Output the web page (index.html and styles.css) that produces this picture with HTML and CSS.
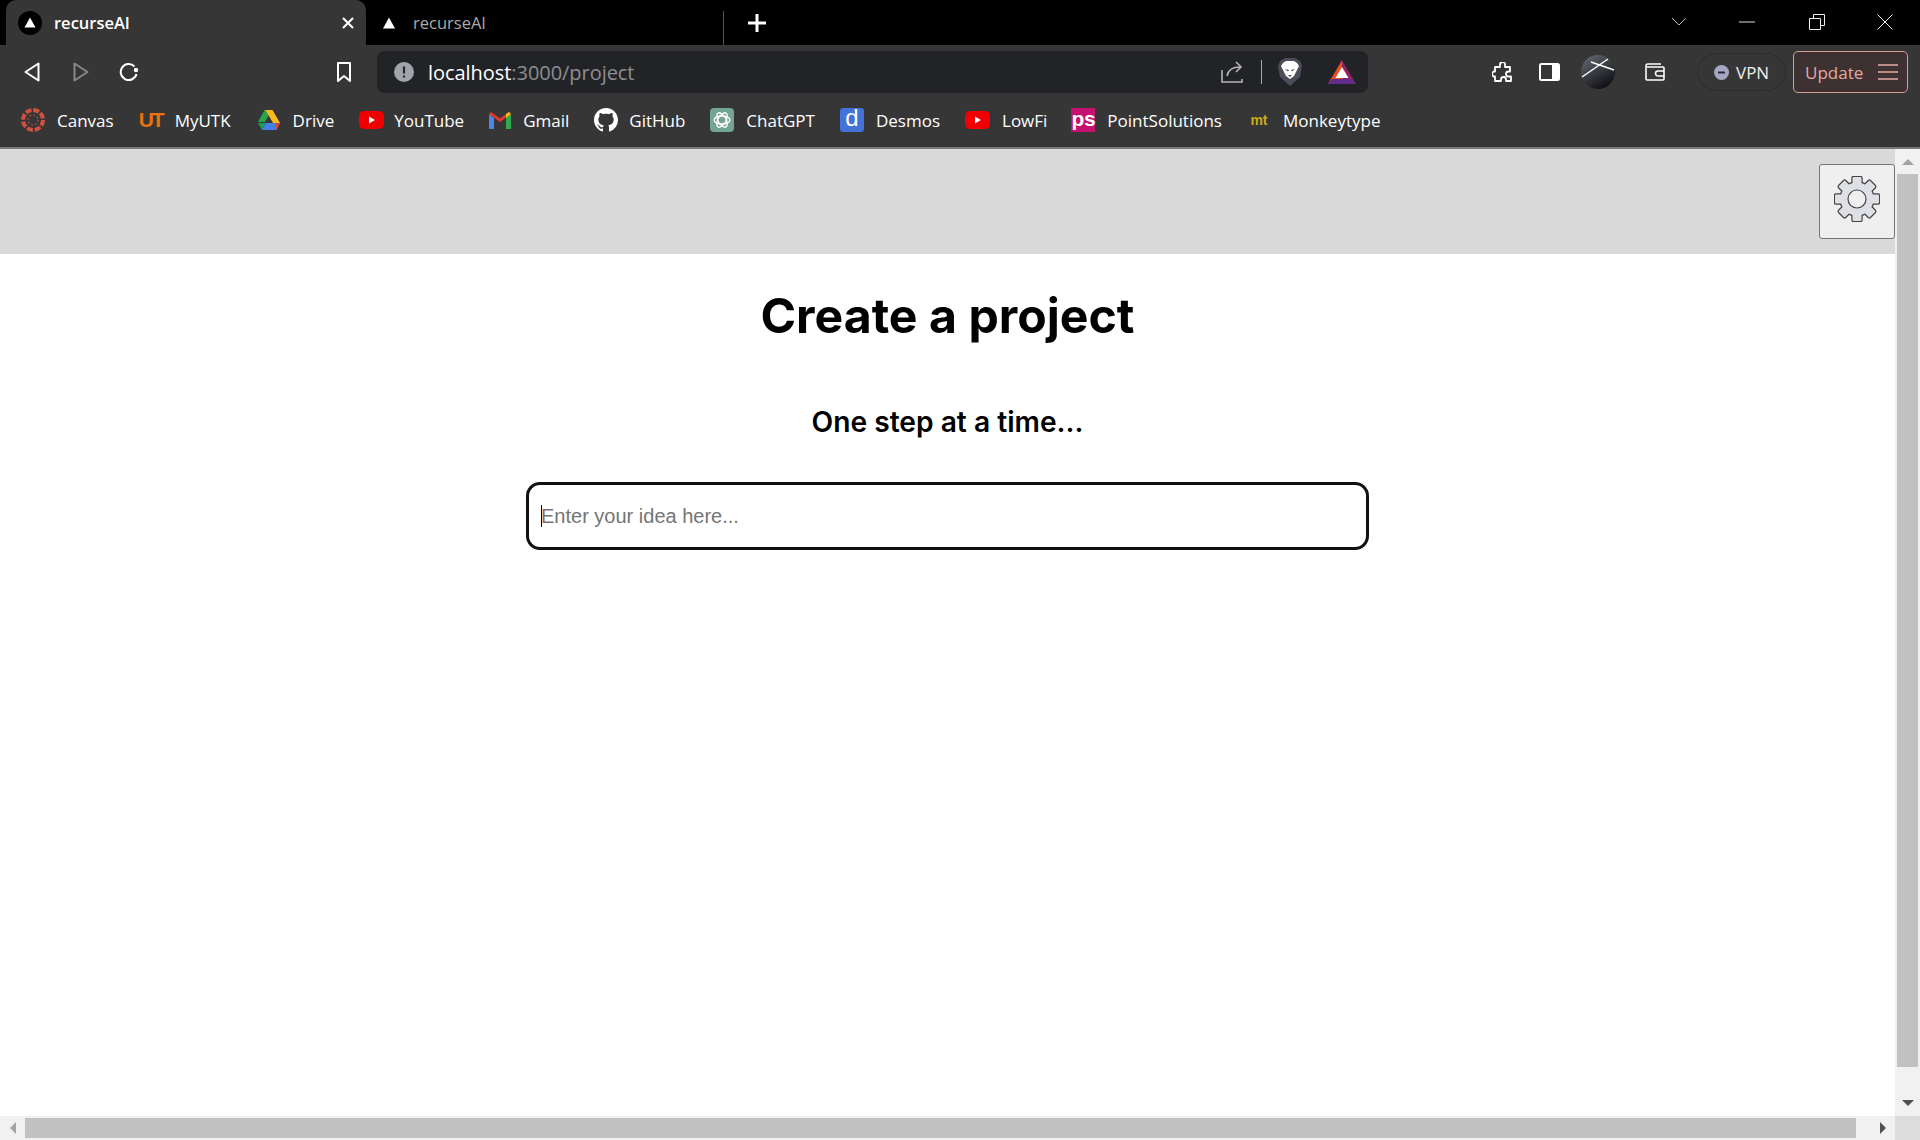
FILE: index.html
```html
<!DOCTYPE html>
<html>
  <head>
    <title>recurseAI</title>
    <meta charset="UTF-8" />
    <link rel="stylesheet" href="styles.css">
  </head>

  <body>
    <div class="tabstrip">
      <div class="tab tab-active">
        <svg class="tab-logo" width="24" height="24" viewBox="0 0 24 24"><circle cx="12" cy="12" r="12" fill="#000"/><path d="M12 6.500l5.500 10h-11z" fill="#fff"/></svg>
        <span class="tab-title">recurseAI</span>
        <svg class="tab-close" width="14" height="14" viewBox="0 0 14 14"><path d="M2 2l10 10M12 2L2 12" stroke="#fff" stroke-width="2"/></svg>
      </div>
      <div class="tab tab-idle">
        <svg class="tab-tri" width="16" height="14" viewBox="0 0 16 14"><path d="M8 1.500l6 11H2z" fill="#fff"/></svg>
        <span class="tab-title">recurseAI</span>
      </div>
      <svg class="new-tab" width="20" height="20" viewBox="0 0 20 20"><path d="M10 1v18M1 10h18" stroke="#fff" stroke-width="3"/></svg>
      <div class="window-btns">
        <svg width="16" height="10" viewBox="0 0 16 10"><path d="M1 1l7 7 7-7" fill="none" stroke="#bbb"/></svg>
        <svg class="win-min" width="16" height="2" viewBox="0 0 16 2"><path d="M0 1h16" stroke="#ddd"/></svg>
        <svg width="16" height="16" viewBox="0 0 16 16"><path d="M.5 4.500h11v11H.5zM4.500 4V.5h11v11H12" fill="none" stroke="#eee"/></svg>
        <svg width="16" height="16" viewBox="0 0 16 16"><path d="M.5.5l15 15M15.500.5l-15 15" stroke="#eee"/></svg>
      </div>
    </div>

    <div class="toolbar">
      <svg class="ico ico-back" width="16" height="20" viewBox="0 0 16 20"><path d="M14.500 1.500v17L1.500 10z" fill="none" stroke="#fff" stroke-width="2" stroke-linejoin="round"/></svg>
      <svg class="ico ico-fwd" width="16" height="20" viewBox="0 0 16 20"><path d="M1.500 1.500v17L14.500 10z" fill="none" stroke="#888" stroke-width="2" stroke-linejoin="round"/></svg>
      <svg class="ico ico-reload" width="20" height="20" viewBox="0 0 20 20"><path d="M15.500 4.500A8 8 0 1 0 17.500 12" fill="none" stroke="#fff" stroke-width="2"/><circle cx="17" cy="8" r="2.200" fill="#fff"/></svg>
      <svg class="ico ico-mark" width="14" height="20" viewBox="0 0 14 20"><path d="M1 1h12v18l-6-5-6 5z" fill="none" stroke="#fff" stroke-width="2" stroke-linejoin="round"/></svg>

      <div class="omnibox">
        <svg class="info" width="20" height="20" viewBox="0 0 20 20"><circle cx="10" cy="10" r="10" fill="#a2a3ab"/><path d="M10 4.500v7M10 13.500v2" stroke="#26272b" stroke-width="2.200"/></svg>
        <span class="url"><span class="url-host">localhost</span>:3000/project</span>
        <svg class="ico-share" width="23" height="22" viewBox="0 0 23 22"><path d="M1 9v12h20v-3M6 15c1-6 5-9 13-9M15 1l5 5-5 5" fill="none" stroke="#b5b5b5" stroke-width="1.600"/></svg>
        <span class="omni-sep"></span>
        <svg class="ico-brave" width="24" height="28" viewBox="0 0 24 28"><path d="M2 3l5-3h10l5 3 2 5-2 11-10 9L2 19 0 8z" fill="#4c4d58"/><path d="M5 5l3-2h8l3 2 2 3-2 4-3 6-4 3-4-3-3-6-2-4z" fill="#fff"/><path d="M7 11l4 1-1 1.500zM17 11l-4 1 1 1.500zM10 17h4l-2 2z" fill="#4c4d58"/></svg>
        <svg class="ico-bat" width="28" height="24" viewBox="0 0 28 24"><path d="M14 0L0 24h14z" fill="#e8501f"/><path d="M14 0l14 24H14z" fill="#8f2160"/><path d="M0 24l4-5h20l4 5z" fill="#5f2c8c"/><path d="M14 7l6.500 11h-13z" fill="#fff"/></svg>
      </div>

      <svg class="ico ico-ext" width="21" height="21" viewBox="0 0 21 21"><path d="M8 2.500a2.500 2.500 0 0 1 5 0V5h5v4.500h-1.500a2.500 2.500 0 0 0 0 5H19V19h-5v-1.500a2.500 2.500 0 0 0-5 0V19H3v-4.500H1.500a3 3 0 0 1 0-5H3V5h5z" fill="none" stroke="#fff" stroke-width="1.800" stroke-linejoin="round"/></svg>
      <svg class="ico ico-panel" width="21" height="18" viewBox="0 0 21 18"><rect x="1" y="1" width="19" height="16" rx="1.500" fill="none" stroke="#fff" stroke-width="2"/><rect x="13" y="1" width="7" height="16" fill="#fff"/></svg>
      <svg class="ico ico-avatar" width="34" height="34" viewBox="0 0 34 34"><defs><linearGradient id="av" x1="0" y1="0" x2="0.600" y2="1"><stop offset="0" stop-color="#6b6e78"/><stop offset="1" stop-color="#111216"/></linearGradient></defs><circle cx="17" cy="17" r="17" fill="url(#av)"/><path d="M1 22L27 4M10 7l23 8" stroke="#fff" stroke-width="1.500"/></svg>
      <svg class="ico ico-wallet" width="20" height="18" viewBox="0 0 20 18"><path d="M3 1h13M2 4h16a1 1 0 0 1 1 1v11a1 1 0 0 1-1 1H2a1 1 0 0 1-1-1V3a2 2 0 0 1 2-2M19 8h-6a2 2 0 0 0 0 5h6" fill="none" stroke="#fff" stroke-width="1.600"/></svg>

      <div class="vpn">
        <svg width="15" height="15" viewBox="0 0 15 15"><circle cx="7.500" cy="7.500" r="7.500" fill="#a5a7c2"/><path d="M4 7.500h7" stroke="#25263a" stroke-width="2"/></svg>
        <span>VPN</span>
      </div>
      <div class="update">
        <span>Update</span>
        <svg width="20" height="16" viewBox="0 0 20 16"><path d="M0 1h20M0 8h20M0 15h20" stroke="#e2a9a1" stroke-width="1.600"/></svg>
      </div>
    </div>

    <div class="bookmarks">
      <a class="mark">
        <svg width="24" height="24" viewBox="0 0 24 24"><circle cx="12" cy="12" r="10" fill="none" stroke="#d2503f" stroke-width="4" stroke-dasharray="6 1.850"/><circle cx="12" cy="12" r="5" fill="none" stroke="#d2503f" stroke-width="1.200" stroke-dasharray="1.500 2.400"/></svg>
        <span>Canvas</span>
      </a>
      <a class="mark">
        <span class="fav fav-ut">UT</span>
        <span>MyUTK</span>
      </a>
      <a class="mark mark-drive">
        <svg width="22" height="20" viewBox="0 0 22 20"><path d="M7.500 0h7L8 12H1z" fill="#2ba24c" transform="translate(-1 0)"/><path d="M7.500 0h7L22 13h-7z" fill="#f7bb1e"/><path d="M4 20l3.500-7H22l-3.500 7z" fill="#3f7fe9"/><path d="M0 13h7.500L4 20z" fill="#1f9d58"/><path d="M18.500 20L22 13h-5z" fill="#d9462f"/></svg>
        <span>Drive</span>
      </a>
      <a class="mark mark-tight">
        <svg width="25" height="18" viewBox="0 0 25 18"><rect width="25" height="18" rx="5" fill="#f00000"/><path d="M10 5.500l6 3.500-6 3.500z" fill="#fff"/></svg>
        <span>YouTube</span>
      </a>
      <a class="mark">
        <svg width="22" height="17" viewBox="0 0 22 17"><path d="M0 2v15h5V6z" fill="#4a86e8"/><path d="M22 2v15h-5V6z" fill="#2fa84f"/><path d="M0 2l11 8 11-8-2-2-9 6.500L2 0z" fill="#e5382b"/><path d="M17 6l5-4-2-2-3 2z" fill="#f6bb18"/></svg>
        <span>Gmail</span>
      </a>
      <a class="mark mark-github">
        <svg width="24" height="24" viewBox="0 0 16 16"><path fill="#fff" d="M8 0C3.580 0 0 3.580 0 8c0 3.540 2.290 6.530 5.470 7.590.4.070.55-.17.55-.38 0-.19-.01-.82-.01-1.490-2.010.37-2.530-.49-2.690-.94-.09-.23-.48-.94-.82-1.130-.28-.15-.68-.52-.01-.53.63-.01 1.080.58 1.230.82.72 1.210 1.870.87 2.330.66.07-.52.28-.87.51-1.070-1.780-.2-3.640-.89-3.640-3.950 0-.87.31-1.590.82-2.150-.08-.2-.36-1.020.08-2.120 0 0 .67-.21 2.200.82.64-.18 1.320-.27 2-.27.68 0 1.360.09 2 .27 1.530-1.040 2.200-.82 2.200-.82.44 1.100.16 1.920.08 2.120.51.56.82 1.270.82 2.150 0 3.070-1.870 3.750-3.650 3.950.29.25.54.73.54 1.480 0 1.070-.01 1.930-.01 2.200 0 .21.15.46.55.38A8.013 8.013 0 0 0 16 8c0-4.420-3.580-8-8-8z"/></svg>
        <span>GitHub</span>
      </a>
      <a class="mark">
        <svg width="24" height="24" viewBox="0 0 24 24"><rect width="24" height="24" rx="4" fill="#74a594"/><g fill="none" stroke="#fff" stroke-width="1.300"><ellipse cx="12" cy="12" rx="8" ry="4"/><ellipse cx="12" cy="12" rx="8" ry="4" transform="rotate(60 12 12)"/><ellipse cx="12" cy="12" rx="8" ry="4" transform="rotate(120 12 12)"/></g></svg>
        <span>ChatGPT</span>
      </a>
      <a class="mark">
        <span class="fav fav-desmos">d</span>
        <span>Desmos</span>
      </a>
      <a class="mark">
        <svg width="25" height="18" viewBox="0 0 25 18"><rect width="25" height="18" rx="5" fill="#f00000"/><path d="M10 5.500l6 3.500-6 3.500z" fill="#fff"/></svg>
        <span>LowFi</span>
      </a>
      <a class="mark mark-ps">
        <span class="fav fav-ps">ps</span>
        <span>PointSolutions</span>
      </a>
      <a class="mark">
        <span class="fav fav-mt">mt</span>
        <span>Monkeytype</span>
      </a>
    </div>

    <div class="viewport">
      <div class="view-row">
        <div class="page">
          <div class="page-header">
            <button class="settings">
              <svg width="46" height="46" viewBox="0 0 46 46">
                <defs>
                  <g id="cog">
                    <circle cx="23" cy="23" r="16.500"/>
                    <rect x="18.500" y="1" width="9" height="44" rx="1"/>
                    <rect x="18.500" y="1" width="9" height="44" rx="1" transform="rotate(45 23 23)"/>
                    <rect x="18.500" y="1" width="9" height="44" rx="1" transform="rotate(90 23 23)"/>
                    <rect x="18.500" y="1" width="9" height="44" rx="1" transform="rotate(135 23 23)"/>
                  </g>
                </defs>
                <use href="#cog" fill="#444" stroke="#444" stroke-width="2.400"/>
                <use href="#cog" fill="#dfe0e5"/>
                <circle cx="23" cy="23" r="9" fill="#efefef" stroke="#444" stroke-width="1.200"/>
              </svg>
            </button>
          </div>
          <main class="content">
            <h1>Create a project</h1>
            <h2>One step at a time...</h2>
            <div class="idea-wrap">
              <input class="idea" type="text" placeholder="Enter your idea here...">
            </div>
          </main>
        </div>
        <div class="vscroll">
          <div class="arrow-btn"><span class="arr arr-up"></span></div>
          <div class="vthumb"></div>
          <div class="arrow-btn arrow-end"><span class="arr arr-down"></span></div>
        </div>
      </div>
      <div class="hscroll">
        <div class="arrow-side"><span class="arr arr-left"></span></div>
        <div class="hthumb"></div>
        <div class="arrow-side arrow-right"><span class="arr arr-right"></span></div>
        <div class="corner"></div>
      </div>
    </div>
  </body>
</html>
```

FILE: styles.css
```css
*{
    margin: 0;
    padding: 0;
    box-sizing: border-box;
}
html, body{
    height: 100%;
    overflow: hidden;
}
body{
    display: flex;
    flex-direction: column;
    font-family: "Open Sans", sans-serif;
    background: #fff;
}

/* tab strip */
.tabstrip{
    display: flex;
    align-items: flex-end;
    height: 45px;
    padding-left: 6px;
    background: #000;
}
.tab{
    display: flex;
    align-items: center;
    height: 45px;
    font-size: 16.5px;
}
.tab-active{
    width: 360px;
    padding: 0 11px 0 12px;
    border-radius: 10px 10px 0 0;
    background: #363636;
    color: #fff;
    font-weight: 600;
}
.tab-logo{
    margin-right: 12px;
}
.tab-close{
    margin-left: auto;
}
.tab-idle{
    width: 358px;
    padding-left: 15px;
    border-right: 1px solid #555;
    height: 34px;
    color: #aaa;
    padding-bottom: 11px;
}
.tab-tri{
    margin-right: 16px;
}
.new-tab{
    align-self: center;
    margin-left: 23px;
}
.window-btns{
    display: flex;
    align-items: center;
    align-self: center;
    gap: 52px;
    margin-left: auto;
    padding-right: 27px;
    padding-bottom: 2px;
}
.win-min{
    margin-right: 2px;
}

/* toolbar */
.toolbar{
    display: flex;
    align-items: center;
    height: 54px;
    padding-left: 24px;
    background: #363636;
}
.ico{
    flex: none;
}
.ico-fwd{
    margin-left: 33px;
}
.ico-reload{
    margin-left: 30px;
}
.ico-mark{
    margin-left: 198px;
}
.omnibox{
    display: flex;
    align-items: center;
    width: 991px;
    height: 42px;
    margin-left: 26px;
    padding-left: 17px;
    border-radius: 8px;
    background: #222327;
}
.info{
    margin-right: 14px;
}
.url{
    font-size: 20px;
    letter-spacing: -0.05px;
    color: #8d8e92;
}
.url-host{
    color: #fff;
}
.ico-share{
    margin-left: auto;
}
.omni-sep{
    width: 1px;
    height: 24px;
    margin: 0 16px 0 17px;
    background: #aaa;
}
.ico-bat{
    margin: 0 12px 0 26px;
}
.ico-ext{
    margin-left: 124px;
}
.ico-panel{
    margin-left: 26px;
}
.ico-avatar{
    margin-left: 21px;
}
.ico-wallet{
    margin-left: 30px;
}
.vpn{
    display: flex;
    align-items: center;
    gap: 7px;
    width: 89px;
    height: 38px;
    margin-left: 32px;
    padding-left: 16px;
    border: 1px solid #2b2b2b;
    border-radius: 19px;
    color: #eee;
    font-size: 17px;
}
.update{
    display: flex;
    align-items: center;
    justify-content: space-between;
    width: 115px;
    height: 42px;
    margin-left: 7px;
    padding: 0 9px 0 11px;
    border: 1px solid #d99e97;
    border-radius: 5px;
    background: #3d3131;
    color: #e2a9a1;
    font-size: 17px;
}

/* bookmarks */
.bookmarks{
    display: flex;
    align-items: center;
    gap: 25px;
    height: 50px;
    padding: 0 0 6px 21px;
    background: #363636;
    border-bottom: 2px solid #787878;
    color: #fff;
    font-size: 17px;
}
.mark{
    display: flex;
    align-items: center;
    gap: 12px;
}
.mark-drive{
    gap: 13px;
    margin-left: 2px;
}
.mark-tight{
    gap: 10px;
}
.mark-github{
    gap: 11px;
}
.mark-ps{
    margin-left: -1px;
}
.fav{
    display: flex;
    align-items: center;
    justify-content: center;
    width: 24px;
    height: 24px;
    font-family: "Liberation Sans", sans-serif;
    font-weight: 700;
}
.fav-ut{
    color: #e8720c;
    font-size: 21px;
    letter-spacing: -2px;
}
.fav-desmos{
    border-radius: 3px;
    background: #4472d6;
    font-size: 24px;
    font-weight: 400;
    padding-bottom: 4px;
}
.fav-ps{
    background: #c4106f;
    font-size: 21px;
    padding-bottom: 3px;
    letter-spacing: -0.5px;
}
.fav-mt{
    color: #c9ac1a;
    font-size: 14px;
}

/* page */
.viewport{
    display: flex;
    flex-direction: column;
    flex: 1;
    min-height: 0;
}
.view-row{
    display: flex;
    flex: 1;
    min-height: 0;
}
.page{
    flex: 1;
    min-width: 0;
}
.page-header{
    display: flex;
    justify-content: flex-end;
    align-items: flex-start;
    height: 105px;
    padding-top: 15px;
    background: #d9d9d9;
}
.settings{
    display: flex;
    align-items: center;
    justify-content: center;
    width: 76px;
    height: 75px;
    padding-bottom: 5px;
    border: 1px solid #767676;
    border-radius: 3px;
    background: #efefef;
}
.content{
    display: flex;
    flex-direction: column;
    align-items: center;
    font-family: Inter, sans-serif;
    color: #000;
}
h1{
    margin-top: 33px;
    font-size: 48.2px;
    line-height: 58px;
    font-weight: 700;
}
h2{
    margin-top: 60px;
    font-size: 28.2px;
    line-height: 34px;
    font-weight: 600;
}
.idea-wrap{
    position: relative;
    margin-top: 43px;
}
/* text cursor sitting in the empty field */
.idea-wrap::after{
    content: '';
    position: absolute;
    top: 23px;
    left: 15px;
    width: 1px;
    height: 22px;
    background: #000;
}
.idea{
    display: block;
    width: 843px;
    height: 68px;
    padding-left: 12px;
    border: 3px solid #111;
    border-radius: 14px;
    outline: none;
    font-family: "Liberation Sans", sans-serif;
    font-size: 20px;
}
.idea::placeholder{
    color: #757575;
}

/* scrollbars */
.vscroll{
    display: flex;
    flex-direction: column;
    width: 25px;
    padding-left: 2px;
    padding-right: 2px;
    background: #f1f1f1;
}
.arrow-btn{
    display: flex;
    align-items: center;
    justify-content: center;
    height: 25px;
    flex: none;
}
.arrow-end{
    height: 49px;
    padding-top: 22px;
}
.vthumb{
    flex: 1;
    background: #c1c1c1;
}
.hscroll{
    display: flex;
    align-items: stretch;
    height: 24px;
    background: #f1f1f1;
}
.arrow-side{
    display: flex;
    align-items: center;
    justify-content: center;
    width: 25px;
    flex: none;
}
.arrow-right{
    width: 39px;
    padding-left: 14px;
}
.hthumb{
    flex: 1;
    margin: 2px 0;
    background: #c1c1c1;
}
.corner{
    width: 25px;
    background: #dcdcdc;
}
.arr{
    display: block;
    width: 0;
    height: 0;
    border-style: solid;
    border-color: transparent;
}
.arr-up{
    border-width: 0 6px 6px;
    border-bottom-color: #a3a3a3;
}
.arr-down{
    border-width: 6px 6px 0;
    border-top-color: #505050;
}
.arr-left{
    border-width: 6px 6px 6px 0;
    border-right-color: #a3a3a3;
}
.arr-right{
    border-width: 6px 0 6px 6px;
    border-left-color: #505050;
}
```
